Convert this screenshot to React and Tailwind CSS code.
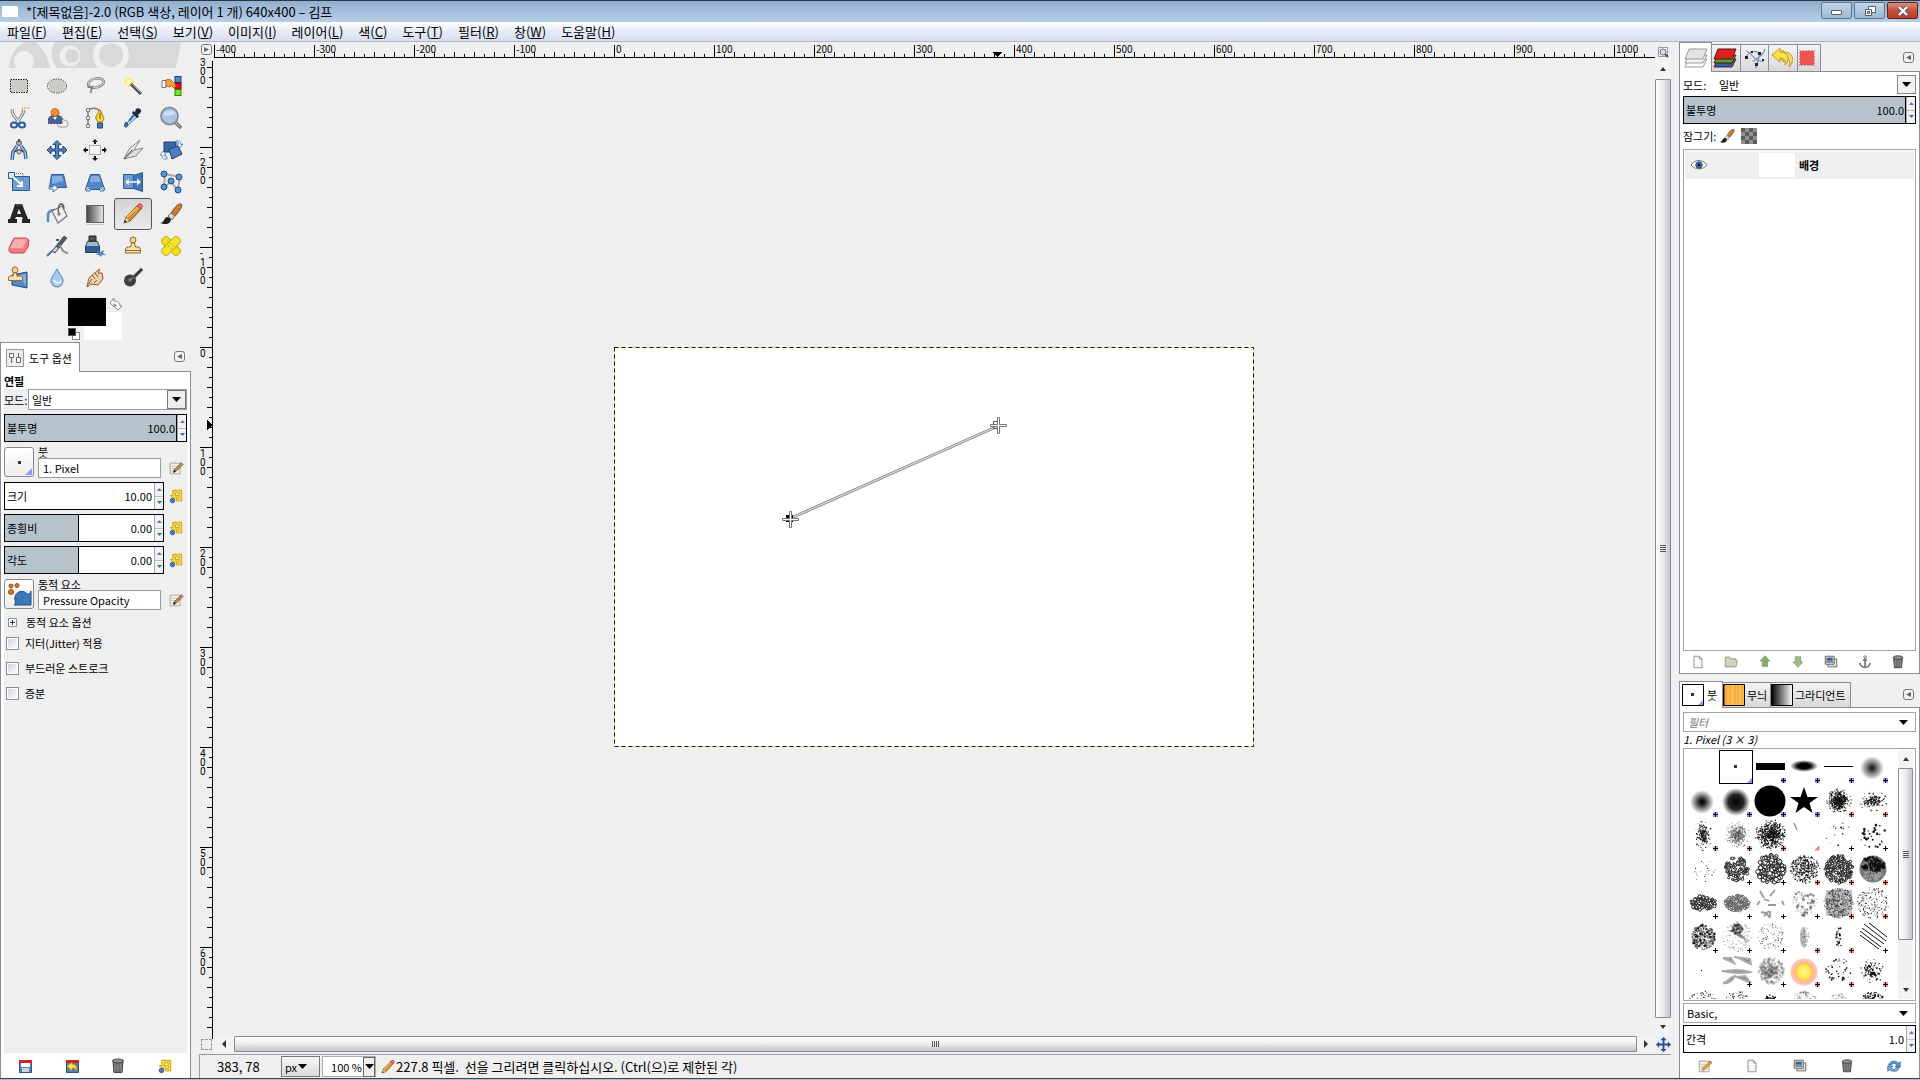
import React from 'react';

const MENUS = [
  ['파일', 'F'],
  ['편집', 'E'],
  ['선택', 'S'],
  ['보기', 'V'],
  ['이미지', 'I'],
  ['레이어', 'L'],
  ['색', 'C'],
  ['도구', 'T'],
  ['필터', 'R'],
  ['창', 'W'],
  ['도움말', 'H'],
];

/* ---------- small shared glyphs ---------- */

const Icon = ({ size = 24, box = 24, children }) => (
  <svg width={size} height={size} viewBox={`0 0 ${box} ${box}`} fill="none" className="shrink-0">
    {children}
  </svg>
);

const Down = ({ color = '#000' }) => (
  <svg width="9" height="5" viewBox="0 0 9 5" className="pointer-events-none shrink-0">
    <path d="M0 0h9L4.500 5z" fill={color} />
  </svg>
);

const Arrow = ({ d, color = '#333' }) => (
  <svg width="8" height="8" viewBox="0 0 8 8">
    <path d={d} fill={color} />
  </svg>
);

const ARROWS = {
  up: 'M1 6h6L4 2z',
  down: 'M1 2h6L4 6z',
  left: 'M6 0v8L2 4z',
  right: 'M2 0v8l4-4z',
};

const MenuButton = ({ dir = 'left', label }) => (
  <button
    aria-label={label}
    className="flex h-[11px] w-[11px] shrink-0 items-center justify-center rounded-[3px] border border-[#777] bg-[#f4f4f4]"
  >
    <svg width="5" height="5" viewBox="0 0 5 5">
      <path d={dir === 'left' ? 'M5 0v5L0 2.500z' : 'M0 0v5l5-2.500z'} fill="#666" />
    </svg>
  </button>
);

/* ---------- tool icons ---------- */

const TOOLS = [
  {
    name: '사각형 선택',
    art: (
      <>
        <rect x="4" y="6" width="16" height="12" fill="#c9ccc7" />
        <rect x="3.500" y="5.500" width="17" height="13" stroke="#fff" />
        <rect x="3.500" y="5.500" width="17" height="13" stroke="#111" strokeDasharray="1.500 1" />
      </>
    ),
  },
  {
    name: '타원 선택',
    art: (
      <>
        <ellipse cx="12" cy="12" rx="9" ry="7" fill="#c9ccc7" stroke="#fff" />
        <ellipse cx="12" cy="12" rx="9.500" ry="7" stroke="#222" strokeDasharray="1.500 1" />
      </>
    ),
  },
  {
    name: '자유 선택',
    art: (
      <>
        <ellipse cx="13" cy="9" rx="8" ry="4.500" transform="rotate(-12 13 9)" stroke="#777" strokeWidth="2.500" />
        <ellipse cx="13" cy="9" rx="8" ry="4.500" transform="rotate(-12 13 9)" stroke="#d8d8d8" strokeWidth="1" />
        <path d="M5 11c-1 3 4 3 5 1M9 13c1 2-2 3-1 6" stroke="#777" strokeWidth="1.500" />
      </>
    ),
  },
  {
    name: '퍼지 선택',
    art: (
      <>
        <circle cx="8" cy="8" r="4.500" fill="#fbf38c" opacity=".8" />
        <path d="M8 3v10M3 8h10M5 5l6 6M11 5l-6 6" stroke="#f3e13a" />
        <path d="m10 10 10 10" stroke="#454a45" strokeWidth="3" />
        <path d="m11 10 9 9" stroke="#a9b0a5" />
        <circle cx="8" cy="8" r="2" fill="#fff" />
      </>
    ),
  },
  {
    name: '색상으로 선택',
    art: (
      <>
        <rect x="16" y="2.500" width="6" height="6" fill="#4d86c8" stroke="#1f4478" />
        <rect x="16" y="9" width="6" height="6" fill="#e01414" stroke="#7c0808" />
        <rect x="16" y="15.500" width="6" height="6" fill="#7de02a" stroke="#3b8205" />
        <path d="M3 6.500h4v7H3z" fill="#fff" stroke="#777" />
        <path d="M7 6c4-2 6 1 8 3l2 3-2 2-3-3-1 2-4-1z" fill="#f8a13a" stroke="#c4650c" />
      </>
    ),
  },
  {
    name: '가위 선택',
    art: (
      <>
        <path d="M22 2h-7v6c0 4-3 5-3 9" stroke="#d79a26" strokeDasharray="2 1" />
        <path d="M5 3c0 6 3 8 8 14M17 4c-1 5-4 9-8 13" stroke="#777" strokeWidth="3" />
        <path d="M5 3c0 6 3 8 8 14M17 4c-1 5-4 9-8 13" stroke="#eee" strokeWidth="1.200" />
        <ellipse cx="7" cy="19" rx="3" ry="2.500" stroke="#2c5a9c" strokeWidth="2" />
        <ellipse cx="15" cy="19" rx="3" ry="2.500" stroke="#2c5a9c" strokeWidth="2" />
      </>
    ),
  },
  {
    name: '전경 선택',
    art: (
      <>
        <path d="M14 11c3-1 4 1 4 3 3 0 5 1 5 4s-2 3-4 3h-4c-2 0-3-2-2-4z" fill="#f2f2f2" stroke="#999" />
        <path d="M3.500 17.500V12l3-2.500h8l2.500 3v5z" fill="#3465a4" stroke="#7a2740" strokeDasharray="2 1" />
        <circle cx="10" cy="6.500" r="4" fill="#f08c32" stroke="#a0521a" strokeDasharray="2 1" />
        <path d="m8 11 2 3 2-3z" fill="#fff" />
      </>
    ),
  },
  {
    name: '경로',
    art: (
      <>
        <path d="M5 4v17M5 4c7-4 13 0 14 5" stroke="#777" strokeWidth="1.500" />
        <path d="M3.500 2.500h3v3h-3zM3.500 10.500h3v3h-3zM3.500 18.500h3v3h-3z" fill="#fff" stroke="#777" />
        <path d="M16 4c-1 4-4 6-3 9l2 3h4l2-3c0-3-3-5-4-9z" fill="#f5d53a" stroke="#a5820c" />
        <path d="M17 7v6" stroke="#775c00" />
        <path d="M14.500 17h5v5h-5z" fill="#4479b8" stroke="#1f4478" />
      </>
    ),
  },
  {
    name: '색 추출',
    art: (
      <>
        <path d="M15 8 6 17l1 2 10-9z" fill="#d9e7f5" stroke="#3b6eab" />
        <path d="M15 3c2-2 6 0 5 3l-3 3 1 2-2 1-5-5 1-2 2 1z" fill="#1d2a42" />
        <path d="M5 16c-2 3-2 5 0 5s2-3 0-5" fill="#3b78c0" stroke="#1f4478" />
        <path d="m13 9-5 6" stroke="#2f68ab" strokeWidth="2" />
      </>
    ),
  },
  {
    name: '확대/축소',
    art: (
      <>
        <path d="m16 16 6 6" stroke="#777" strokeWidth="3.500" />
        <path d="m17 17 4 4" stroke="#ccc" />
        <circle cx="10.500" cy="10" r="8.500" fill="#a9c6ea" stroke="#8a8f94" strokeWidth="1.800" />
        <path d="M4 9c2-5 10-6 13-1-4 0-8 4-13 1z" fill="#cfe0f4" />
      </>
    ),
  },
  {
    name: '측정',
    art: (
      <>
        <circle cx="12" cy="5" r="2.500" fill="#a5afba" stroke="#4c5660" />
        <path d="M12 1v3" stroke="#4c5660" strokeWidth="2" />
        <path d="M10 8 6 14l-1 8M14 8l4 6 1 7" stroke="#2f5b95" strokeWidth="3.500" />
        <path d="M10 8 6 14l-1 8M14 8l4 6 1 7" stroke="#9dbce3" strokeWidth="1.500" />
        <path d="M7 14c3-2 7-2 10 0" stroke="#4c5660" strokeWidth="2" />
        <circle cx="12" cy="14" r="2" fill="#ddd" stroke="#555" />
      </>
    ),
  },
  {
    name: '이동',
    art: (
      <path
        d="m12 2.500 4 4h-2.500V11H18V8l4 4-4 4v-3h-4.500v4.500H16l-4 4-4-4h2.500V13H6v3l-4-4 4-4v3h4.500V6.500H8z"
        fill="#4f83c2"
        stroke="#1c4479"
      />
    ),
  },
  {
    name: '정렬',
    art: (
      <>
        <rect x="6.500" y="7.500" width="11" height="9" fill="#f3f3f3" stroke="#aaa" />
        <path d="m12 1 3 3h-2v2h-2V4H9zM12 23l3-3h-2v-2h-2v2H9zM0 12l3-3v2h2v2H3v2zM24 12l-3-3v2h-2v2h2v2z" fill="#111" />
      </>
    ),
  },
  {
    name: '자르기',
    art: (
      <>
        <path d="m3 21 5-10L19 2l-6 10z" fill="#e9e9e6" stroke="#888" />
        <path d="m3 21 10-9 9-2-7 8z" fill="#dcdcd8" stroke="#888" />
        <path d="m3 21 8-9" stroke="#555" />
      </>
    ),
  },
  {
    name: '회전',
    art: (
      <>
        <path d="M5 4h12v10H5z" fill="#3867a5" stroke="#1c3d6e" />
        <path d="m10 11 9-3 4 8-10 5z" fill="#4a7fc0" stroke="#1c3d6e" />
        <path
          d="M17 3c4-1 5 1 5 4l2-1-3 4-3-4h2c0-2-1-2-3-2zM8 21c-4 1-5-1-5-4H1l3-4 3 4H5c0 2 1 2 3 2z"
          fill="#fff"
          stroke="#4377b5"
          strokeWidth=".8"
        />
      </>
    ),
  },
  {
    name: '크기 조절',
    art: (
      <>
        <path d="M5.500 6.500h17v14h-17z" fill="#6f9cd0" stroke="#2b5896" />
        <path d="M1.500 2.500h6v6h-6z" fill="#dbe7f5" stroke="#2b5896" />
        <path d="m6 7 9 8m0-4v5h-5" stroke="#fff" strokeWidth="1.800" />
        <path d="M9 3.500h7v8" stroke="#666" strokeDasharray="1 1" />
      </>
    ),
  },
  {
    name: '기울이기',
    art: (
      <>
        <path d="M6.500 4.500h12l3 13H4.500z" fill="#5288c7" stroke="#2b5896" />
        <path d="M7 6h10l1 5L7 14z" fill="#86aedd" />
        <path d="M4 17h4v-3l5 4-5 4v-3H4z" fill="#fff" stroke="#3b6eab" />
      </>
    ),
  },
  {
    name: '원근',
    art: (
      <>
        <path d="M7.500 4.500h9l5 15h-19z" fill="#5288c7" stroke="#2b5896" />
        <path d="M8 6h8l2 6H7z" fill="#86aedd" />
        <path d="M3 17h4v4H3zM17 17h4v4h-4z" fill="#fff" stroke="#3b6eab" />
        <path d="m4 20 2-2M20 20l-2-2" stroke="#3b6eab" />
      </>
    ),
  },
  {
    name: '뒤집기',
    art: (
      <>
        <path d="M2.500 4.500h10v14h-10z" fill="#6f9cd0" stroke="#2b5896" />
        <path d="m12.500 5.500 9-3v19l-9-3z" fill="#3f76b8" stroke="#2b5896" />
        <path d="m4 12 4-4v3h8V8l4 4-4 4v-3H8v3z" fill="#fff" stroke="#5b8bc4" strokeWidth=".6" />
      </>
    ),
  },
  {
    name: '케이지 변형',
    art: (
      <>
        <path d="m6 4 15 3-2 13-7-8-7 5z" stroke="#aaa" strokeWidth="2" />
        {[
          [5, 4],
          [20, 7],
          [12, 11],
          [5, 17],
          [19, 20],
        ].map(([x, y]) => (
          <circle key={x + '-' + y} cx={x} cy={y} r="3" fill="#5b8fd0" stroke="#1f4b88" />
        ))}
      </>
    ),
  },
  {
    name: '텍스트',
    art: (
      <>
        <path d="M8 2h7l6 15h2v4h-8v-4h1l-1-2H9l-1 2h2v4H1v-4h2zM12 7l-2 5h4z" fill="#242424" fillRule="evenodd" />
        <path d="M9 3h5" stroke="#666" />
      </>
    ),
  },
  {
    name: '채우기',
    art: (
      <>
        <path d="M3 20v-8c1-3 4-4 7-4" stroke="#5b8bc4" strokeWidth="2.500" />
        <path d="m7 9 10-5 5 10-9 7z" fill="#f0f0ee" stroke="#777" strokeWidth="1.200" />
        <path d="M14 12c-2-5 0-10 2-10s3 2 3 5" stroke="#555" strokeWidth="1.300" />
        <circle cx="14" cy="12" r="1.800" fill="#888" />
      </>
    ),
  },
  {
    name: '그라디언트',
    art: (
      <>
        <defs>
          <linearGradient id="blend">
            <stop stopColor="#444" />
            <stop offset="1" stopColor="#e8e8e8" />
          </linearGradient>
        </defs>
        <rect x="3.500" y="3.500" width="17" height="17" fill="url(#blend)" stroke="#666" />
        <path d="M3 22.500h18" stroke="#ccc" />
      </>
    ),
  },
  {
    name: '연필',
    active: true,
    art: (
      <>
        <path d="m3 21 2-6L17 3l4 3L9 19z" fill="#d5922f" stroke="#80500f" />
        <path d="m6 15 11-10" stroke="#f3c574" strokeWidth="1.500" />
        <path d="m16 4 2-2c2-1 4 1 3 3l-1 2z" fill="#f36b6b" stroke="#c43a3a" />
        <path d="m3 21 2-5 3 3z" fill="#f3dfbc" />
        <path d="m3 21 1-3 2 2z" fill="#222" />
      </>
    ),
  },
  {
    name: '붓',
    art: (
      <>
        <path d="M12 12C14 7 19 1 22 2s-3 9-7 13z" fill="#c77c35" stroke="#7e4712" />
        <path d="m9 14 3-3 4 3-3 4z" fill="#d6d6d6" stroke="#777" />
        <path d="M1 21c4 0 4-5 7-6 3 0 5 3 3 5-2 3-7 2-10 1z" fill="#1b1b1b" />
      </>
    ),
  },
  {
    name: '지우개',
    art: (
      <>
        <path d="M2 14 7 4h12l3 2-1 7-4 6H4l-2-2z" fill="#f07a7f" stroke="#cf474d" />
        <path d="M3 14 8 5h12l-4 9z" fill="#f8aeb0" />
      </>
    ),
  },
  {
    name: '에어브러시',
    art: (
      <>
        <path d="m7 17 12-15 3 2L10 19z" fill="#4d5a62" stroke="#333" strokeWidth=".6" />
        <path d="m8 17 3-4 2 1-3 4z" fill="#dfe5e9" />
        <path d="M14 12c3-2 0 6 9 7" stroke="#888" strokeWidth="1.800" />
        <path d="m7 17-5 5" stroke="#3e74b6" strokeWidth="2" />
        <path d="M11 6h3" stroke="#555" strokeWidth="2" />
      </>
    ),
  },
  {
    name: '잉크',
    art: (
      <>
        <path d="M6 2h7v5H6z" fill="#4b5459" stroke="#222" />
        <path d="M4.500 7.500h10l2 5v6h-14v-6z" fill="#a8b6bf" stroke="#333f48" />
        <path d="M3 12h13v6H3z" fill="#2c5d9f" />
        <path d="m14 17 3 1 4-2-1 3 3 2h-4l-1 2-2-2h-3l2-2z" fill="#5485bf" />
      </>
    ),
  },
  {
    name: '도장',
    art: (
      <>
        <circle cx="12" cy="6" r="3" fill="#ecd39c" stroke="#9a6b1b" />
        <path d="M10.500 9h3l1 4H18l1.500 2v4h-15v-4L6 13h3.500z" fill="#f3dfb4" stroke="#9a6b1b" />
        <path d="M5 16.500h14" stroke="#9a6b1b" />
      </>
    ),
  },
  {
    name: '치료',
    art: (
      <>
        <rect x="1" y="8" width="22" height="8" rx="3" transform="rotate(45 12 12)" fill="#f2dc1e" stroke="#c9ae04" />
        <rect x="1" y="8" width="22" height="8" rx="3" transform="rotate(-45 12 12)" fill="#f5e32e" stroke="#c9ae04" />
        <path d="M9 12h1M12 9v1M12 14v1M14 12h1" stroke="#a28b00" />
      </>
    ),
  },
  {
    name: '원근 도장',
    art: (
      <>
        <path d="m5 9 15-3v16l-15-3z" fill="#5288c7" stroke="#1f4b88" />
        <path d="m12 9 7-1v12z" fill="#86aedd" />
        <circle cx="8" cy="4" r="3" fill="#ecd39c" stroke="#9a6b1b" />
        <path d="M6.500 7h3l.5 3h4l1.500 1v3.500H1.500V11L3 10h3z" fill="#f3dfb4" stroke="#9a6b1b" />
      </>
    ),
  },
  {
    name: '흐리게/선명하게',
    art: (
      <>
        <path d="M12 3c3 6 6 8 6 12a6 6 0 0 1-12 0c0-4 3-6 6-12z" fill="#a9c9ee" stroke="#4f7eb8" />
        <path d="M9 14c1 3 5 4 7 1" stroke="#e7f1fc" strokeWidth="2" />
      </>
    ),
  },
  {
    name: '문지르기',
    art: (
      <>
        <path d="M4 21c1-4 1-8 3-10l7-6 3-2-2 4h4l1 6-5 6-7-1z" fill="#f3cfae" stroke="#8f5a2d" />
        <path d="m4 20 5-7M9 9l3 4M12 7l3 4M11 17l3-3" stroke="#8f5a2d" />
      </>
    ),
  },
  {
    name: '닷지/번',
    art: (
      <>
        <path d="m12 12 9-9" stroke="#777" strokeWidth="3.500" />
        <path d="m12 12 9-9" stroke="#333" strokeWidth="2" />
        <circle cx="9" cy="14.500" r="6" fill="#3c3f41" />
        <circle cx="9" cy="14" r="2" fill="#6b6f72" />
        <path d="m9 14 4-3" stroke="#999" />
      </>
    ),
  },
];

/* ---------- button icons ---------- */

const Art = {
  page: <path d="M4.500 2.500h6l3 3v10h-9zM10.500 2.500v3h3" fill="#fafafa" stroke="#888" />,
  folder: <path d="M2.500 14.500v-11h5l1 2h6v2h1.500l-1.500 7z" fill="#ced5bd" stroke="#8c947c" />,
  up: <path d="m9 2 5.500 6H12v6H6V8H3.500z" fill="#86ac6c" stroke="#6b8f58" strokeDasharray="1 .5" />,
  down: <path d="m9 15 5.500-6H12V3H6v6H3.500z" fill="#9dbd86" stroke="#6b8f58" strokeDasharray="1 .5" />,
  copy: (
    <>
      <path d="M5.500 5.500h10v9h-10z" fill="#ddd" stroke="#666" />
      <path d="M2.500 2.500h10v9h-10z" fill="#eee" stroke="#555" />
      <path d="M4 4h7v6H4z" fill="#37618f" />
      <path d="M4 7h7v3H4z" fill="#7d95a8" />
    </>
  ),
  anchor: (
    <>
      <path d="M9 4v11M3 10c1 4 3 5 6 5s5-1 6-5M6.500 7h5" stroke="#7c7f7c" strokeWidth="2" />
      <circle cx="9" cy="3.500" r="1.500" stroke="#7c7f7c" />
    </>
  ),
  trash: (
    <>
      <path d="M4 4h10l-1 11.500H5z" fill="#6a6e6a" stroke="#444" />
      <path d="M6 6v8M9 6v8M12 6v8" stroke="#8c908c" />
      <ellipse cx="9" cy="4" rx="5.500" ry="2" fill="#8f938f" stroke="#444" />
    </>
  ),
  edit: (
    <>
      <path d="M2.500 3.500h11v12h-11z" fill="#f4f4f0" stroke="#999" />
      <path d="M4 7h6M4 9.500h5M4 12h4" stroke="#bbb" />
      <path d="m6 14 1-3 8-8 2 2-8 8z" fill="#c78b45" stroke="#5d3b12" strokeWidth=".7" />
      <path d="m6 14 1-3 2 2z" fill="#222" />
    </>
  ),
  editRed: (
    <>
      <path d="M2.500 3.500h11v12h-11z" fill="#f4f4f0" stroke="#999" />
      <path d="M4 7h6M4 9.500h5M4 12h4" stroke="#bbb" />
      <path d="m6 14 1-3 7-7 2 2-7 7z" fill="#f0a33c" stroke="#a05c12" strokeWidth=".7" />
      <path d="m14 4 1-1 2 2-1 1z" fill="#e24545" />
    </>
  ),
  refresh: (
    <>
      <path d="M3 8c1-5 8-6 11-2l2-2v6h-6l2-2c-2-3-5-2-6 0z" fill="#5d93d4" stroke="#2d5b9c" strokeWidth=".8" />
      <path d="M15 10c-1 6-8 6-11 3l-2 2v-6h6l-2 2c2 3 5 2 6-1z" fill="#7eabe0" stroke="#2d5b9c" strokeWidth=".8" />
    </>
  ),
  reset: (
    <>
      <path d="M5.500 2.500h10v12h-6v-3h3v-6h-4v3h3l-4.500 4-4.500-4h3z" fill="#f7da3c" stroke="#bf9d08" />
      <circle cx="5" cy="14" r="2.500" fill="#4d7fbf" stroke="#2b5287" />
    </>
  ),
  save: (
    <>
      <path d="M3.500 3.500h12v12h-12z" fill="#5b7fae" stroke="#34547e" />
      <path d="M3 3h13v3H3z" fill="#d32121" />
      <path d="M5 6h9v4H5z" fill="#fff" />
      <path d="M6 11h7v4H6z" fill="#ccd3da" />
    </>
  ),
  restore: (
    <>
      <path d="M3.500 3.500h12v12h-12z" fill="#5b7fae" stroke="#34547e" />
      <path d="M3 3h13v3H3z" fill="#d32121" />
      <path d="m4 9 5-4v2c4 0 5 3 5 7-1-2-3-3-5-3v3z" fill="#f9e04a" stroke="#a58905" strokeWidth=".7" />
    </>
  ),
};

const IconButton = ({ label, art, size = 18 }) => (
  <button aria-label={label} className="flex h-5 w-5 items-center justify-center">
    <Icon size={size} box={18}>
      {Art[art]}
    </Icon>
  </button>
);

/* ---------- form bits ---------- */

const SpinArrows = () => (
  <span className="flex w-[9px] shrink-0 flex-col border-l border-[#aaa] bg-[#f2f2f2]">
    <button aria-label="증가" className="flex flex-1 items-center justify-center border-b border-[#bbb]">
      <Arrow d="M2 6h5L4.500 3z" color="#5a74c4" />
    </button>
    <button aria-label="감소" className="flex flex-1 items-center justify-center">
      <Arrow d="M2 2h5L4.500 5z" color="#3f5fc8" />
    </button>
  </span>
);

const SpinScale = ({ label, value, fill = 0, className = '' }) => (
  <div className={`relative flex h-7 border border-black bg-white ${className}`}>
    {fill > 0 && (
      <div className="absolute inset-y-0 left-0 border-r border-black bg-[#b6c3cd]" style={{ width: `${fill}%` }} />
    )}
    <label className="relative flex min-w-0 flex-1 items-center pl-[2px]">
      <span className="shrink-0">{label}</span>
      <input
        defaultValue={value}
        className="w-0 min-w-0 flex-1 bg-transparent pr-[2px] text-right text-[11px] outline-none"
      />
    </label>
    <span className="relative flex">
      <SpinArrows />
    </span>
  </div>
);

const CheckRow = ({ children }) => (
  <label className="flex h-[18px] items-center gap-[6px] pl-[2px]">
    <input
      type="checkbox"
      className="h-[13px] w-[13px] appearance-none border border-[#8a8f94] bg-linear-to-br from-[#cfd3d8] to-white outline-1 -outline-offset-2 outline-white"
    />
    {children}
  </label>
);

const ResourceRow = ({ label, value, preview }) => (
  <div className="flex h-8 items-center">
    <button
      aria-label={label}
      className="relative flex h-[30px] w-[30px] items-center justify-center rounded-[3px] border border-[#8a8a8a] bg-linear-to-b from-white to-[#eee]"
    >
      {preview}
    </button>
    <label className="ml-1 flex w-[123px] flex-col">
      <span className="h-[12px] leading-[12px]">{label}</span>
      <input defaultValue={value} className="h-5 w-full border border-[#9a9aa2] bg-white pl-1 text-[11px]" />
    </label>
    <span className="mr-[1px] ml-auto flex h-8 items-end">
      <IconButton label={`${label} 편집`} art="edit" size={16} />
    </span>
  </div>
);

const ScaleRow = ({ label, value, fill }) => (
  <div className="flex items-center justify-between pr-[1px]">
    <SpinScale label={label} value={value} fill={fill} className="w-[160px]" />
    <IconButton label={`${label} 초기화`} art="reset" size={16} />
  </div>
);

/* ---------- rulers ---------- */

// One tick each 10 px, longer each 20 px, full height with a number each 100 px.
const steps = (from, to) => Array.from({ length: (to - from) / 10 + 1 }, (_, i) => from + i * 10);

const HRuler = () => (
  <svg className="block h-4 w-full" fill="#000" shapeRendering="crispEdges">
    <rect x="1" y="15" width="100%" height="1" />
    {steps(-400, 1030).map((v) => {
      const h = v % 100 === 0 ? 12 : v % 20 === 0 ? 5 : 3;
      return <rect key={v} x={v + 401} y={15 - h} width="1" height={h} />;
    })}
    {steps(-400, 1030)
      .filter((v) => v % 100 === 0)
      .map((v) => (
        <text key={v} x={v + 403} y="11" fontSize="10">
          {v}
        </text>
      ))}
    <path d="M779 10h10l-5 5z" />
  </svg>
);

// The numbers run downwards, one character below the other.
const VRuler = () => (
  <svg className="block h-full w-[14px] overflow-visible font-['Roboto',sans-serif]" fill="#000" shapeRendering="crispEdges">
    <rect x="13" y="3" width="1" height="100%" />
    {steps(-280, 680).map((v) => {
      const w = v % 100 === 0 ? 12 : v % 20 === 0 ? 5 : 3;
      return <rect key={v} x={13 - w} y={v + 289} width={w} height="1" />;
    })}
    {[-300, -200, -100, 0, 100, 200, 300, 400, 500, 600].map((v) =>
      String(v)
        .split('')
        .map((c, i) => ({ c, y: v + 299 + i * 9 }))
        .filter(({ y }) => y > 0)
        .map(({ c, y }) => (
          <text key={y} x="1" y={y} fontSize="10">
            {c}
          </text>
        )),
    )}
    <path d="M8 362v10l5-5z" />
  </svg>
);

/* ---------- brush previews ---------- */

const random = (seed) => {
  let s = seed * 7919 + 13;
  return () => {
    s = (s * 16807) % 2147483647;
    return s / 2147483647;
  };
};

const Specks = ({ seed, n, rx = 13, ry = 13, min = 0.3, max = 0.8, gauss, color = '#111', cy = 16 }) => {
  const r = random(seed);
  r();
  return Array.from({ length: n }, (_, i) => {
    const a = r() * Math.PI * 2;
    const d = gauss ? Math.min(1.1, Math.sqrt(-2 * Math.log(r())) * 0.4) : Math.sqrt(r());
    return (
      <circle key={i} cx={17 + Math.cos(a) * d * rx} cy={cy + Math.sin(a) * d * ry} r={min + r() * (max - min)} fill={color} />
    );
  });
};

const Cells = ({ seed, n = 60, rx = 13, ry = 13, color = '#111', size = 1 }) => {
  const r = random(seed);
  r();
  return Array.from({ length: n }, (_, i) => {
    const a = r() * Math.PI * 2;
    const d = Math.sqrt(r());
    return (
      <circle
        key={i}
        cx={17 + Math.cos(a) * d * rx}
        cy={16 + Math.sin(a) * d * ry}
        r={size * (0.6 + r())}
        fill="#fff"
        stroke={color}
        strokeWidth=".9"
      />
    );
  });
};

const Soft = ({ id, r, core }) => (
  <>
    <defs>
      <radialGradient id={id}>
        <stop stopColor="#000" />
        <stop offset={core} stopColor="#000" stopOpacity=".85" />
        <stop offset="1" stopColor="#000" stopOpacity="0" />
      </radialGradient>
    </defs>
    <circle cx="16" cy="17" r={r} fill={`url(#${id})`} />
  </>
);

// mark: b = blue plus, r = red plus, k = plain plus, c = red corner
const BRUSHES = [
  { name: 'Clipboard' },
  { name: '1. Pixel', selected: true, art: <rect x="14" y="14" width="3" height="3" fill="#333" /> },
  { name: 'Block 01', mark: 'b', art: <rect x="2" y="12" width="29" height="7" fill="#050505" /> },
  {
    name: 'Ellipse',
    mark: 'b',
    art: (
      <>
        <defs>
          <radialGradient id="ell">
            <stop offset=".45" stopColor="#000" />
            <stop offset="1" stopColor="#000" stopOpacity="0" />
          </radialGradient>
        </defs>
        <ellipse cx="16" cy="15" rx="14" ry="6" fill="url(#ell)" />
      </>
    ),
  },
  { name: 'Line', mark: 'b', art: <rect x="2" y="15" width="29" height="1" fill="#000" /> },
  { name: 'Hardness 025', mark: 'b', art: <Soft id="h25" r={12} core=".1" /> },
  { name: 'Hardness 050', mark: 'b', art: <Soft id="h50" r={12} core=".25" /> },
  { name: 'Hardness 075', mark: 'b', art: <Soft id="h75" r={14} core=".55" /> },
  { name: 'Hardness 100', mark: 'b', art: <circle cx="16" cy="16" r="15.500" fill="#000" /> },
  {
    name: 'Star',
    mark: 'b',
    art: <path d="m16 2 3.500 10H30l-8.500 6 3 10-8.500-6-8.500 6 3-10L2 12h10.500z" fill="#000" />,
  },
  { name: 'Acrylic 01', mark: 'r', art: <Specks seed={1} n={560} rx={11} ry={11} gauss /> },
  { name: 'Acrylic 02', mark: 'r', art: <Specks seed={2} n={190} rx={13} ry={9} gauss /> },
  { name: 'Acrylic 03', mark: 'r', art: <Specks seed={3} n={190} rx={8} ry={14} gauss /> },
  { name: 'Acrylic 04', mark: 'r', art: <Specks seed={4} n={420} rx={11} ry={12} gauss color="#4448" /> },
  {
    name: 'Acrylic 05',
    mark: 'r',
    art: (
      <>
        <Specks seed={5} n={560} rx={14} ry={14} gauss />
        <Specks seed={6} n={110} rx={15} ry={14} />
      </>
    ),
  },
  { name: 'Animated Confetti', mark: 'c', art: <path d="m6 4 3 7" stroke="#999" strokeWidth="1.500" /> },
  { name: 'Bristles 01', mark: 'k', art: <Specks seed={8} n={13} max={1.1} color="#333" /> },
  { name: 'Bristles 02', mark: 'k', art: <Specks seed={9} n={32} min={0.5} max={1.4} /> },
  { name: 'Bristles 03', art: <Specks seed={10} n={20} min={0.4} max={0.6} /> },
  { name: 'Cell 01', mark: 'k', art: <Cells seed={11} n={110} rx={12} ry={12} size={0.9} /> },
  { name: 'Cell 02', mark: 'k', art: <Cells seed={12} n={150} rx={14} ry={14} size={1.4} /> },
  {
    name: 'Chalk 01',
    mark: 'r',
    art: (
      <>
        <Specks seed={13} n={230} rx={15} ry={14} />
        <Specks seed={14} n={160} gauss />
      </>
    ),
  },
  { name: 'Chalk 02', mark: 'r', art: <Cells seed={15} n={210} rx={14} ry={14} size={0.9} /> },
  {
    name: 'Chalk 03',
    mark: 'r',
    art: (
      <>
        <circle cx="17" cy="16" r="13.500" fill="#777" />
        <Specks seed={16} n={120} rx={12} ry={8} cy={12} max={1.6} />
        <Specks seed={17} n={70} rx={11} ry={5} cy={23} max={1} color="#aaa" />
      </>
    ),
  },
  { name: 'Charcoal 01', mark: 'k', art: <Cells seed={18} n={120} rx={13} ry={7} /> },
  { name: 'Charcoal 02', mark: 'k', art: <Cells seed={19} n={200} rx={12} ry={8} color="#555" size={0.8} /> },
  {
    name: 'Charcoal 03',
    mark: 'k',
    art: (
      <path
        d="m6 4 4 7M16 9l5-6M3 18l3-4M10 12l5 2M14 18h8M28 14l2 4M7 25l5 1 4 5M16 24v6M10 29l5-5"
        stroke="#999"
        strokeWidth="1.800"
      />
    ),
  },
  {
    name: 'Crosshatch',
    mark: 'k',
    art: (
      <>
        <Specks seed={21} n={40} max={1.6} color="#3339" />
        <Specks seed={22} n={100} color="#8888" />
      </>
    ),
  },
  {
    name: 'Concrete',
    mark: 'r',
    art: (
      <>
        <rect x="4" y="3" width="26" height="26" fill="#c4c4c4" />
        <Specks seed={23} n={460} rx={15} ry={15} color="#2229" />
      </>
    ),
  },
  { name: 'Dots', mark: 'r', art: <Specks seed={24} n={230} rx={16} ry={16} min={0.3} max={0.6} /> },
  {
    name: 'Grass',
    mark: 'k',
    art: (
      <>
        <Specks seed={25} n={240} rx={12} ry={13} max={1.2} color="#3338" />
        <Specks seed={26} n={60} rx={12} ry={12} max={1.2} />
      </>
    ),
  },
  {
    name: 'Smudge',
    mark: 'k',
    art: (
      <>
        <Specks seed={45} n={120} rx={6} ry={5} cy={8} max={1.2} color="#3338" />
        <path d="M14 9c5 1 6 3 8 5l6 6-9-4c-3-2-5-4-5-7z" fill="#3339" />
        <Specks seed={27} n={170} rx={15} ry={15} color="#7778" />
      </>
    ),
  },
  { name: 'Texture 01', mark: 'k', art: <Specks seed={28} n={110} rx={13} ry={14} min={0.3} max={0.6} color="#444" /> },
  {
    name: 'Texture 02',
    mark: 'r',
    art: (
      <>
        <ellipse cx="15" cy="16" rx="3" ry="10" fill="#bbb" />
        <Specks seed={29} n={60} rx={4} ry={11} color="#5558" />
      </>
    ),
  },
  { name: 'Texture 03', mark: 'r', art: <Specks seed={30} n={26} rx={3} ry={11} max={1.1} /> },
  {
    name: 'Pencil Scratch',
    mark: 'k',
    art: <path d="m4 14 19 14M4 10l21 16M6 7l22 16M8 3l22 17M13 2l18 14" stroke="#111" />,
  },
  { name: 'Pencil 01', art: <rect x="15" y="15" width="1" height="1" fill="#000" /> },
  {
    name: 'Oils',
    mark: 'k',
    art: (
      <path
        d="M3 3h8l3 5zM14 2c6 0 10 5 17 7l-1-5zM2 16c8 0 14-3 28 1-8 2-18 1-28-1zM3 28c6-1 6-6 12-7-2 5-7 8-12 7zM17 22l14 6-6-7z"
        fill="#888"
        stroke="#aaa"
        strokeWidth="2"
      />
    ),
  },
  {
    name: 'Smoke',
    mark: 'k',
    art: (
      <>
        <Specks seed={33} n={240} rx={13} ry={13} max={1.6} color="#6664" />
        <Specks seed={34} n={180} rx={12} ry={12} gauss max={1.4} color="#5555" />
      </>
    ),
  },
  {
    name: 'Sparks',
    mark: 'r',
    art: (
      <>
        <defs>
          <radialGradient id="sun">
            <stop stopColor="#fffa9a" />
            <stop offset=".45" stopColor="#ffe640" />
            <stop offset=".6" stopColor="#fdbb83" />
            <stop offset=".85" stopColor="#fcb09a" stopOpacity=".8" />
            <stop offset="1" stopColor="#fcb09a" stopOpacity="0" />
          </radialGradient>
        </defs>
        <circle cx="16" cy="17" r="14.500" fill="url(#sun)" />
      </>
    ),
  },
  { name: 'Splats 01', mark: 'r', art: <Specks seed={36} n={50} max={1} /> },
  {
    name: 'Splats 02',
    mark: 'r',
    art: (
      <>
        <Specks seed={37} n={90} rx={12} ry={10} gauss max={1} />
        <Specks seed={38} n={25} />
      </>
    ),
  },
  { name: 'Splats 03', art: <Specks seed={39} n={190} rx={15} ry={14} min={0.3} max={0.7} color="#333" /> },
  { name: 'Sponge 01', art: <Specks seed={40} n={170} rx={14} ry={14} min={0.3} max={0.7} color="#444" /> },
  { name: 'Sponge 02', art: <Specks seed={41} n={130} rx={8} ry={10} max={1} /> },
  { name: 'Stipple', art: <Specks seed={42} n={230} rx={13} ry={14} color="#5558" /> },
  { name: 'Vegetation 01', art: <Specks seed={43} n={150} rx={10} ry={12} color="#7778" /> },
  { name: 'Vegetation 02', art: <Specks seed={44} n={190} rx={13} ry={13} max={1.1} /> },
];

const BrushCell = ({ brush }) => (
  <button aria-label={brush.name} className={`h-[34px] w-[34px] ${brush.selected ? 'border border-black' : ''}`}>
    <svg viewBox={brush.selected ? '1 1 32 32' : '0 0 34 34'} className="block h-full w-full" fill="none">
      <g transform="translate(1 1)">{brush.art}</g>
      {brush.mark === 'b' && <path d="M28 28h5v5h-5z" fill="#8c9cff" />}
      {brush.mark === 'r' && <path d="M28 28h5v5h-5z" fill="#ff9c9c" />}
      {brush.mark && brush.mark !== 'c' && <path d="M28 30h2v-2h1v2h2v1h-2v2h-1v-2h-2z" fill="#000" />}
      {brush.mark === 'c' && <path d="M32 28v4h-4z" fill="#ff8080" stroke="#ff8080" />}
      {brush.selected && <path d="M33 28v5h-5z" fill="#7f95ff" />}
    </svg>
  </button>
);

/* ---------- scroll bars ---------- */

const GripH = () => (
  <span className="flex gap-[1px]">
    <span className="h-[6px] w-[1px] bg-[#555]" />
    <span className="h-[6px] w-[1px] bg-[#555]" />
    <span className="h-[6px] w-[1px] bg-[#555]" />
    <span className="h-[6px] w-[1px] bg-[#555]" />
  </span>
);

const GripV = () => (
  <span className="flex flex-col gap-[1px]">
    <span className="h-[1px] w-[6px] bg-[#555]" />
    <span className="h-[1px] w-[6px] bg-[#555]" />
    <span className="h-[1px] w-[6px] bg-[#555]" />
    <span className="h-[1px] w-[6px] bg-[#555]" />
  </span>
);

const ScrollButton = ({ dir, className = '' }) => (
  <button aria-label={dir} className={`flex shrink-0 items-center justify-center bg-[#f3f3f3] ${className}`}>
    <Arrow d={ARROWS[dir]} />
  </button>
);

/* ---------- panels ---------- */

const TitleBar = () => (
  <header className="flex h-[22px] shrink-0 items-center border-t border-[#2e3640] bg-linear-to-b from-[#90afd0] to-[#b7cfe8] pl-[2px]">
    <span className="h-[11px] w-4 bg-white" />
    <h1 className="ml-2 flex-1 text-[13px] leading-[20px] whitespace-pre">
      *[제목없음]-2.0 (RGB 색상, 레이어 1 개) 640x400 – 김프
    </h1>
    <div className="flex gap-[2px] self-start pt-[1px] pr-[2px]">
      <button
        aria-label="최소화"
        className="flex h-[17px] w-[31px] items-center justify-center rounded-[2px] border border-[#5d7894] bg-linear-to-b from-[#c3d5e8] to-[#9db8d4]"
      >
        <span className="mt-1 h-[5px] w-[11px] rounded-[1px] border border-[#56606c] bg-white" />
      </button>
      <button
        aria-label="이전 크기로"
        className="flex h-[17px] w-[31px] items-center justify-center rounded-[2px] border border-[#5d7894] bg-linear-to-b from-[#c3d5e8] to-[#9db8d4]"
      >
        <svg width="12" height="12" viewBox="0 0 12 12" fill="#fff" stroke="#56606c">
          <path d="M4.500 1.500h7v6h-7z" />
          <path d="M1.500 4.500h6v6h-6z" />
          <path d="M3.500 6.500h2v2h-2z" fill="#a9c0d8" />
        </svg>
      </button>
      <button
        aria-label="닫기"
        className="flex h-[17px] w-[31px] items-center justify-center rounded-[2px] border border-[#6b1d12] bg-linear-to-b from-[#d88f80] via-[#c4503a] to-[#b5412b]"
      >
        <svg width="12" height="10" viewBox="0 0 12 10">
          <path d="m2 1 8 8M10 1 2 9" stroke="#5b4f5a" strokeWidth="4" />
          <path d="m2 1 8 8M10 1 2 9" stroke="#fff" strokeWidth="2.400" />
        </svg>
      </button>
    </div>
  </header>
);

const MenuBar = () => (
  <nav className="flex h-5 shrink-0 items-center gap-[15px] border-b border-[#aeb6cc] bg-linear-to-b from-white via-[#e6ebf5] to-[#d9dff0] pl-[7px] text-[13px] leading-[18px]">
    {MENUS.map(([name, key]) => (
      <button key={key} className="whitespace-nowrap">
        {name}(<span className="underline">{key}</span>)
      </button>
    ))}
  </nav>
);

const ToolBox = () => (
  <aside className="flex w-[191px] shrink-0 flex-col">
    <svg viewBox="0 0 191 28" className="h-7 w-full shrink-0" fill="#d9d9d9">
      <path d="M9 26C10 12 18 0 28 0h153l-5 26z" />
      <circle cx="24" cy="19" r="10" fill="#efefef" />
      <path d="M36 0c6 6 12 14 14 26h8C50 18 50 8 55 0z" fill="#efefef" />
      <circle cx="70" cy="14" r="17" fill="#efefef" />
      <circle cx="111" cy="13" r="18" fill="#efefef" />
      <circle cx="72" cy="14" r="7" />
      <circle cx="70" cy="14" r="14" fill="none" stroke="#d9d9d9" strokeWidth="7" />
      <circle cx="111" cy="13" r="12" />
      <path d="M0 26h191v2H0z" fill="#efefef" />
    </svg>

    <div className="grid grid-cols-[repeat(5,38px)]">
      {TOOLS.map((tool) => (
        <button
          key={tool.name}
          aria-label={tool.name}
          className={`flex h-8 items-center justify-center ${
            tool.active ? 'rounded-[3px] border border-[#555] bg-linear-to-b from-[#d2d2d2] to-[#ebebeb]' : ''
          }`}
        >
          <Icon>{tool.art}</Icon>
        </button>
      ))}
    </div>

    {/* Foreground / background colours */}
    <div className="h-[47px] shrink-0 pl-[67px]">
      <svg width="60" height="47" viewBox="0 0 60 47" fill="none">
        <rect x="17" y="18" width="38" height="28" fill="#fff" />
        <rect x="1" y="4" width="38" height="28" fill="#000" />
        <rect x="5.500" y="38.500" width="7" height="7" fill="#fff" stroke="#888" />
        <rect x="1.500" y="34.500" width="7" height="7" fill="#000" stroke="#555" />
        <path d="m43 9 4-5v3c4 0 6 2 6 5h2l-4 4-4-4h2c0-2-1-2-2-2v3z" fill="#fff" stroke="#888" />
      </svg>
    </div>

    <div className="flex h-[30px] shrink-0 items-end">
      <div className="relative z-10 -mb-px flex h-[30px] w-20 items-center gap-[5px] border border-b-0 border-[#8c8c98] bg-white pl-[5px]">
        <span className="flex h-[18px] w-[18px] items-center justify-center border border-[#999] bg-[#eee]">
          <svg width="14" height="14" viewBox="0 0 14 14" fill="#fff" stroke="#666">
            <path d="M1.500 2.500h4v4h-4zM8.500 6.500h4v5h-4z" />
            <path d="M3.500 7v5M10.500 2v4" />
          </svg>
        </span>
        도구 옵션
      </div>
      <div className="flex h-[30px] flex-1 items-center justify-end pr-[6px]">
        <MenuButton label="탭 설정" />
      </div>
    </div>

    <section className="flex min-h-0 flex-1 flex-col border border-b-0 border-[#8c8c98] bg-white px-[3px]">
      <h2 className="h-[17px] leading-[18px] font-bold">연필</h2>
      <div className="flex min-h-0 flex-1 flex-col gap-1 bg-[#efefef]">
        <label className="flex h-[21px] items-center">
          <span className="w-6 shrink-0 whitespace-nowrap">모드:</span>
          <span className="flex h-[21px] flex-1 items-center border border-[#9a9aa2] bg-white">
            <select className="h-full flex-1 appearance-none pl-[3px] text-[11px] outline-none">
              <option>일반</option>
            </select>
            <span className="flex h-[19px] w-[19px] items-center justify-center border border-[#777] bg-[#eee]">
              <Down />
            </span>
          </span>
        </label>
        <SpinScale label="불투명" value="100.0" fill={95} />
        <ResourceRow
          label="붓"
          value="1. Pixel"
          preview={
            <svg width="28" height="28" viewBox="0 0 28 28">
              <rect x="13" y="13" width="3" height="3" fill="#333" />
              <path d="M27 20v7h-7z" fill="#8c9eff" />
            </svg>
          }
        />
        <ScaleRow label="크기" value="10.00" />
        <ScaleRow label="종횡비" value="0.00" fill={47} />
        <ScaleRow label="각도" value="0.00" fill={47} />
        <ResourceRow
          label="동적 요소"
          value="Pressure Opacity"
          preview={
            <svg width="26" height="26" viewBox="0 0 26 26">
              <g fill="#dd7a20" stroke="#9c4b08">
                <circle cx="5" cy="5" r="2" />
                <circle cx="11" cy="4.500" r="2" />
                <circle cx="5" cy="11" r="2.500" />
              </g>
              <path d="M8 24c3-2 0-5 1-8 1-6 9-7 11-4 2 2 4 1 5-2v14z" fill="#3f77bd" stroke="#1f4b88" />
            </svg>
          }
        />
        <button className="flex h-4 items-center gap-[9px] pl-1">
          <svg width="9" height="9" viewBox="0 0 9 9" fill="#fff" stroke="#8a8f98">
            <path d="M.5.5h8v8h-8z" />
            <path d="M2 4.500h5M4.500 2v5" stroke="#223a7a" />
          </svg>
          동적 요소 옵션
        </button>
        <div className="flex flex-col gap-[7px]">
          <CheckRow>지터(Jitter) 적용</CheckRow>
          <CheckRow>부드러운 스트로크</CheckRow>
          <CheckRow>증분</CheckRow>
        </div>
      </div>
      <div className="flex h-[25px] shrink-0 items-center justify-between pr-3 pl-[11px]">
        <IconButton label="저장" art="save" />
        <IconButton label="복원" art="restore" />
        <IconButton label="삭제" art="trash" />
        <IconButton label="초기화" art="reset" size={16} />
      </div>
    </section>
  </aside>
);

const Canvas = () => (
  <main className="flex min-w-0 flex-1 flex-col pl-2">
    <div className="flex h-4 shrink-0">
      <span className="flex w-[14px] justify-center pt-[2px]">
        <MenuButton dir="right" label="이미지 메뉴" />
      </span>
      <div className="min-w-0 flex-1">
        <HRuler />
      </div>
      <button aria-label="창 크기에 맞춰 확대" className="mr-2 flex w-4 items-center justify-center pt-1">
        <svg width="12" height="12" viewBox="0 0 12 12" fill="none">
          <path d="M1.500 1.500h9v9h-9z" stroke="#24508c" strokeDasharray="1 1" />
          <circle cx="6" cy="6" r="3" fill="#ddd" stroke="#777" />
          <path d="m8 8 3 3" stroke="#555" strokeWidth="2" />
        </svg>
      </button>
    </div>

    <div className="flex min-h-0 flex-1">
      <VRuler />
      <div className="flex min-w-0 flex-1 items-center justify-center overflow-hidden">
        <svg width="640" height="400" viewBox="0 0 640 400" fill="none" className="shrink-0">
          <path d="M0 0h640v400H0z" fill="#fff" />
          <path d="M.5.5h639v399H.5z" stroke="#eeee6a" />
          <path d="M.5.5h639v399H.5z" stroke="#111" strokeDasharray="4 3" />
          <path d="M176 171.500 382 80" stroke="#888" strokeWidth="3" />
          <path d="M176 171.500 382 80" stroke="#ddd" strokeWidth="1.200" />
          <path d="M172 168h7v7h-7z" fill="#000" />
          <path d="M379.500 74.500h6v7h-6z" stroke="#555" />
          <g fill="#fff" stroke="#777">
            <path d="M175.500 164.500h2v7h7v2h-7v7h-2v-7h-7v-2h7z" />
            <path d="M383.500 70.500h2v7h7v2h-7v7h-2v-7h-7v-2h7z" />
          </g>
        </svg>
      </div>
      <div className="mr-2 flex w-4 flex-col">
        <ScrollButton dir="up" className="h-[21px]" />
        <div className="flex flex-1 items-center justify-center rounded-[1px] border border-[#8a8a90] bg-linear-to-r from-white via-[#ececec] to-[#c4c4cc]">
          <GripV />
        </div>
        <ScrollButton dir="down" className="h-[18px]" />
      </div>
    </div>

    <div className="mr-2 flex h-4 shrink-0">
      <button aria-label="빠른 마스크" className="flex w-[14px] items-center justify-center">
        <span className="h-[11px] w-[11px] border border-dashed border-[#999]" />
      </button>
      <ScrollButton dir="left" className="w-[21px]" />
      <div className="flex flex-1 items-center justify-center rounded-[1px] border border-[#8a8a90] bg-linear-to-b from-white via-[#ececec] to-[#c4c4cc]">
        <GripH />
      </div>
      <ScrollButton dir="right" className="w-[18px]" />
      <button aria-label="탐색" className="flex w-4 items-center justify-center">
        <svg width="15" height="15" viewBox="0 0 24 24">
          <path
            d="m12 0 5 5h-3.500v5.500H19V7l5 5-5 5v-3.500h-5.500V19H17l-5 5-5-5h3.500v-5.500H5V17l-5-5 5-5v3.500h5.500V5H7z"
            fill="#1d4f94"
          />
        </svg>
      </button>
    </div>

    <footer className="mt-[2px] mr-2 flex h-6 shrink-0 items-center border-t border-l border-[#9a9aa0] text-[13px]">
      <output className="w-[81px] pl-[17px] whitespace-nowrap">383, 78</output>
      <label className="flex h-[21px] w-[39px] items-center border border-[#777] bg-linear-to-b from-[#f6f6f6] to-[#dcdcdc] pr-3 pl-[3px]">
        <select aria-label="단위" className="w-[14px] appearance-none text-[11px]">
          <option>px</option>
        </select>
        <Down />
      </label>
      <label className="ml-[2px] flex h-[21px] w-[54px] items-center border border-[#aaa] bg-white">
        <input aria-label="확대" defaultValue="100 %" className="w-0 min-w-0 flex-1 pr-[1px] text-right text-[11px]" />
        <span className="flex h-[20px] w-3 items-center justify-center border border-[#666] bg-[#eee]">
          <Down />
        </span>
      </label>
      <span className="ml-1">
        <Icon size={16}>{TOOLS[23].art}</Icon>
      </span>
      <p className="whitespace-pre">227.8 픽셀.  선을 그리려면 클릭하십시오. (Ctrl(으)로 제한된 각)</p>
    </footer>
  </main>
);

const SideTab = ({ label, className = 'w-[29px]', children }) => (
  <button
    aria-label={label}
    className={`flex h-[27px] items-center justify-center overflow-hidden border border-b-0 border-l-0 border-[#8c8c98] bg-linear-to-b from-[#f4f4f4] to-[#d8d8d8] ${className}`}
  >
    <Icon>{children}</Icon>
  </button>
);

const Sheets = ({ top, mid, low, line }) => (
  <g stroke={line}>
    <path d="M1 21 5 13h18l-4 8z" fill={low} />
    <path d="M1 17 5 9h18l-4 8z" fill={mid} />
    <path d="M1 13 5 3h18l-4 10z" fill={top} />
  </g>
);

const LayersDock = () => (
  <>
    <div className="relative z-10 -mb-px flex h-[30px] shrink-0 items-end">
      <div className="flex h-[30px] w-[33px] items-center justify-center border border-b-0 border-[#8c8c98] bg-white">
        <Icon>
          <Sheets top="#e4e4e4" mid="#f4f4f4" low="#fff" line="#999" />
        </Icon>
      </div>
      <div className="mb-px flex">
        <SideTab label="채널" className="w-[29px] pr-[3px]">
          <Sheets top="#e01e1e" mid="#4fa02a" low="#2d5fb0" line="#5a1414" />
        </SideTab>
        <SideTab label="경로" className="w-7">
          <path d="M2 12c5-8 12-8 14-4s-6 14-2 14M3 5c7 2 8 12 18 10M22 3c-2 8-8 8-12 13" stroke="#7593bd" strokeWidth="1.200" />
          <path d="M2 10h3v3H2zM8 5h2v2H8zM15 6h3v3h-3zM12 17h3v3h-3zM19 13h2v2h-2z" fill="#222" />
        </SideTab>
        <SideTab label="실행 취소" className="w-[29px]">
          <path d="M12 9V4l-7 6M13 6c8 0 12 8 5 15 2-6 0-9-5-9v4L6 9" fill="#f3dd72" stroke="#bd9a13" />
          <path d="m1 9 8-7v4c8 0 11 7 5 13 1-5-1-7-5-7v4z" fill="#fbe04c" stroke="#bd9a13" />
        </SideTab>
        <SideTab label="선택 편집기" className="w-[23px] pr-1">
          <path d="M5 5h14v14H5z" fill="#f25454" />
          <path d="M4.500 4.500h15v15h-15z" stroke="#fff" strokeDasharray="1 1" />
          <path d="M4.500 4.500h15v15h-15z" stroke="#844" strokeDasharray="1 2" />
        </SideTab>
      </div>
      <div className="flex h-[30px] flex-1 items-center justify-end pr-[6px]">
        <MenuButton label="탭 설정" />
      </div>
    </div>

    <section className="flex min-h-0 flex-1 flex-col border border-[#8c8c98] bg-white px-[3px] pt-[2px]">
      <label className="flex h-[21px] shrink-0 items-center">
        <span className="w-9 whitespace-nowrap">모드:</span>
        <select className="flex-1 appearance-none text-[11px]">
          <option>일반</option>
        </select>
        <span className="flex h-[19px] w-[19px] items-center justify-center border border-[#888] bg-[#f2f2f2]">
          <Down />
        </span>
      </label>
      <SpinScale label="불투명" value="100.0" fill={96} className="mt-[1px] shrink-0" />
      <div className="flex h-6 shrink-0 items-center">
        <span className="w-9 whitespace-nowrap">잠그기:</span>
        <button aria-label="픽셀 잠그기">
          <Icon size={16}>{TOOLS[24].art}</Icon>
        </button>
        <button aria-label="알파 채널 잠그기" className="ml-[6px]">
          <svg width="16" height="16" viewBox="0 0 4 4" shapeRendering="crispEdges">
            <path d="M0 0h4v4H0z" fill="#8f8f8f" />
            <path
              d="M0 0h1v1H0zM2 0h1v1H2zM1 1h1v1H1zM3 1h1v1H3zM0 2h1v1H0zM2 2h1v1H2zM1 3h1v1H1zM3 3h1v1H3z"
              fill="#5c5c5c"
            />
          </svg>
        </button>
      </div>
      <ul className="mt-px min-h-0 flex-1 border border-[#a4a4ac] p-[1px]">
        <li className="flex h-7 items-center bg-[#efefef] font-bold">
          <button aria-label="보이기" className="ml-[5px] w-[69px]">
            <svg width="18" height="12" viewBox="0 0 18 12" fill="#fff" stroke="#777">
              <path d="M1 6c4-6 12-6 16 0-4 5-12 5-16 0z" />
              <circle cx="9" cy="6" r="3.200" fill="#3f6fb0" stroke="#234a80" />
              <circle cx="9" cy="6" r="1.200" fill="#000" stroke="none" />
            </svg>
          </button>
          <span className="mr-1 h-6 w-9 bg-white" />
          배경
        </li>
      </ul>
      <div className="flex h-[22px] shrink-0 items-center justify-between pr-2 pl-[5px]">
        <IconButton label="새 레이어" art="page" size={16} />
        <IconButton label="레이어 그룹" art="folder" size={16} />
        <IconButton label="올리기" art="up" size={16} />
        <IconButton label="내리기" art="down" size={16} />
        <IconButton label="복제" art="copy" size={16} />
        <IconButton label="고정" art="anchor" size={16} />
        <IconButton label="삭제" art="trash" size={16} />
      </div>
    </section>
  </>
);

const BrushDock = () => (
  <>
    <div className="relative z-10 mt-[7px] -mb-px flex h-[27px] shrink-0 items-end">
      <div className="flex h-[27px] w-11 items-center gap-[3px] border border-b-0 border-[#8c8c98] bg-white pl-[2px] whitespace-nowrap">
        <svg width="22" height="22" viewBox="0 0 22 22" className="shrink-0">
          <path d="M.5.5h21v21H.5z" fill="#fff" stroke="#000" />
          <path d="M9 9h3v3H9z" fill="#333" />
          <path d="M21 16v5h-5z" fill="#8c9eff" />
        </svg>
        붓
      </div>
      <button className="mb-px flex h-[25px] w-12 items-center gap-[2px] border border-b-0 border-l-0 border-[#8c8c98] bg-linear-to-b from-[#f4f4f4] to-[#d8d8d8] whitespace-nowrap">
        <svg width="22" height="22" viewBox="0 0 22 22" className="shrink-0">
          <path d="M.5.5h21v21H.5z" fill="#fcc052" stroke="#000" />
          <path d="M3 1v20M7 1v20M12 1v20M15 1v20M19 1v20" stroke="#eb9a2c" />
          <path d="M1 1h1v20H1z" fill="#b3541a" />
        </svg>
        무늬
      </button>
      <button className="mb-px flex h-[25px] w-20 items-center gap-[2px] border border-b-0 border-l-0 border-[#8c8c98] bg-linear-to-b from-[#f4f4f4] to-[#d8d8d8] whitespace-nowrap">
        <svg width="22" height="22" viewBox="0 0 22 22" className="shrink-0">
          <defs>
            <linearGradient id="gradtab">
              <stop stopColor="#000" />
              <stop offset="1" stopColor="#fff" />
            </linearGradient>
          </defs>
          <path d="M.5.5h21v21H.5z" fill="url(#gradtab)" stroke="#000" />
        </svg>
        그라디언트
      </button>
      <div className="flex h-[27px] flex-1 items-center justify-end pr-[6px]">
        <MenuButton label="탭 설정" />
      </div>
    </div>

    <section className="flex shrink-0 flex-col border border-b-0 border-[#8c8c98] bg-white px-[3px] pt-1">
      <div className="flex h-5 items-center border border-[#a4a4ac] pr-[7px]">
        <input aria-label="필터" placeholder="필터" className="w-0 flex-1 pl-1 text-[11px] italic placeholder:text-[#777]" />
        <Down />
      </div>
      <p className="h-4 leading-[15px] italic">1. Pixel (3 × 3)</p>
      <div className="flex h-[253px] justify-between border border-[#a4a4ac] p-[1px]">
        <div className="grid grid-cols-[repeat(6,34px)] content-start overflow-hidden">
          {BRUSHES.map((brush) => (
            <BrushCell key={brush.name} brush={brush} />
          ))}
        </div>
        <div className="mr-[1px] flex w-[15px] flex-col bg-[#f0f0f0]">
          <ScrollButton dir="up" className="h-[18px]" />
          <div className="flex h-[172px] items-center justify-center rounded-[1px] border border-[#8a8a90] bg-linear-to-r from-white via-[#ececec] to-[#c4c4cc]">
            <GripV />
          </div>
          <span className="flex-1" />
          <ScrollButton dir="down" className="h-[18px]" />
        </div>
      </div>
      <div className="mt-[2px] flex h-5 items-center border border-[#a4a4ac] pr-[7px]">
        <input aria-label="태그" defaultValue="Basic," className="w-0 flex-1 pl-[3px] text-[11px]" />
        <Down />
      </div>
      <SpinScale label="간격" value="1.0" className="mt-[2px]" />
      <div className="flex h-[25px] items-center justify-between px-3">
        <IconButton label="붓 편집" art="editRed" size={16} />
        <IconButton label="새 붓" art="page" size={16} />
        <IconButton label="붓 복제" art="copy" size={16} />
        <IconButton label="붓 삭제" art="trash" size={16} />
        <IconButton label="새로 고침" art="refresh" size={16} />
      </div>
    </section>
  </>
);

export default function App() {
  return (
    <div className="flex h-screen flex-col overflow-hidden bg-[#efefef] font-['Noto_Sans_CJK_KR','Noto_Sans',sans-serif] text-[11px] leading-[14px] text-black">
      <TitleBar />
      <MenuBar />
      <div className="flex min-h-0 flex-1">
        <ToolBox />
        <Canvas />
        <aside className="flex w-[241px] shrink-0 flex-col">
          <LayersDock />
          <BrushDock />
        </aside>
      </div>
      <div className="h-[2px] shrink-0 border-t border-[#33495a] bg-[#a9bccb]" />
    </div>
  );
}
